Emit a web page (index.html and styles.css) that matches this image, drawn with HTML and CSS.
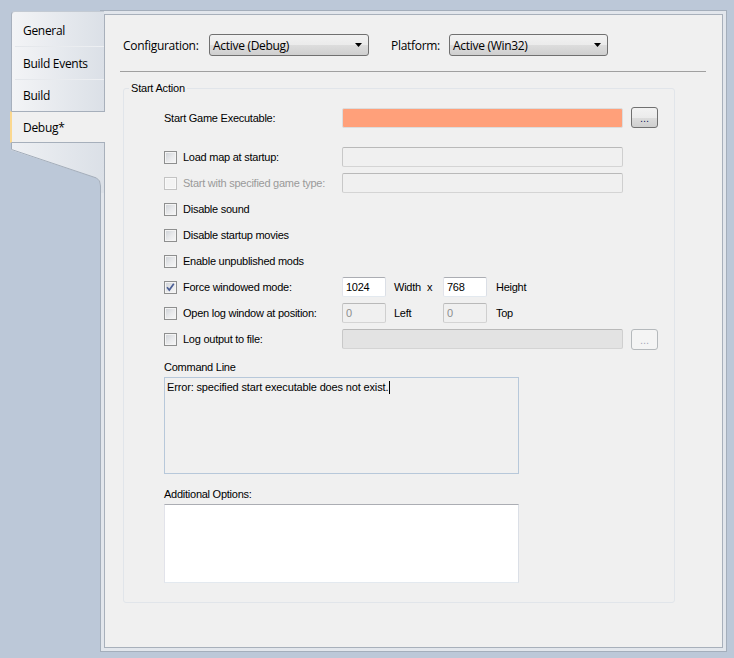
FILE: index.html
```html
<!DOCTYPE html>
<html>
<head>
<meta charset="utf-8">
<link rel="stylesheet" href="styles.css">
</head>
<body>
<div class="window">
  <nav class="tabs">
    <div class="tab-strip">
      <div class="tab">General</div>
      <div class="tab-sep"></div>
      <div class="tab">Build Events</div>
      <div class="tab-sep"></div>
      <div class="tab">Build</div>
    </div>
    <div class="tab active">Debug*</div>
    <svg class="tab-tail" width="94" height="50" viewBox="0 0 94 50">
      <defs>
        <linearGradient id="tailg" x1="0" y1="0" x2="1" y2="0">
          <stop offset="0" stop-color="#eef0f3"/>
          <stop offset="1" stop-color="#dbe0e7"/>
        </linearGradient>
      </defs>
      <path d="M1,0 H94 V50 H90 V43 Q90,37 86,35 L1,7 Z" fill="url(#tailg)"/>
      <path d="M1.5,0 V6.5 L86.5,35 Q90.5,37 90.5,43 V50" fill="none" stroke="#a3adba" stroke-width="1"/>
    </svg>
  </nav>
  <div class="frame">
    <div class="panel">
      <div class="cfg-row">
        <span class="cfg-label cfg-first">Configuration:</span>
        <div class="select sel-config"><span>Active (Debug)</span><svg class="arrow" width="7" height="4" viewBox="0 0 7 4"><path d="M0,0 H7 L3.5,4 Z" fill="#000"/></svg></div>
        <span class="cfg-label cfg-second">Platform:</span>
        <div class="select sel-platform"><span>Active (Win32)</span><svg class="arrow" width="7" height="4" viewBox="0 0 7 4"><path d="M0,0 H7 L3.5,4 Z" fill="#000"/></svg></div>
      </div>
      <div class="sep"></div>
      <fieldset class="group">
        <legend>Start Action</legend>
        <div class="group-body">
          <div class="row row-first">
            <span class="lbl">Start Game Executable:</span>
            <input class="tb tb-wide tb-error" type="text" value="">
            <span class="btn">...</span>
          </div>
          <div class="row">
            <span class="lbl"><span class="cb"></span>Load map at startup:</span>
            <input class="tb tb-wide tb-off" type="text" value="" disabled>
          </div>
          <div class="row">
            <span class="lbl lbl-dis"><span class="cb cb-dis"></span>Start with specified game type:</span>
            <input class="tb tb-wide tb-off" type="text" value="" disabled>
          </div>
          <div class="row">
            <span class="lbl"><span class="cb"></span>Disable sound</span>
          </div>
          <div class="row">
            <span class="lbl"><span class="cb"></span>Disable startup movies</span>
          </div>
          <div class="row">
            <span class="lbl"><span class="cb"></span>Enable unpublished mods</span>
          </div>
          <div class="row">
            <span class="lbl"><span class="cb cb-on"><svg width="11" height="11" viewBox="0 0 11 11"><path d="M2,5.2 L4.3,8 L8.8,1.8" fill="none" stroke="#4b5f96" stroke-width="1.7"/></svg></span>Force windowed mode:</span>
            <input class="tb tb-num" type="text" value="1024">
            <span class="unit unit-a">Width</span><span class="unit unit-x">x</span>
            <input class="tb tb-num" type="text" value="768">
            <span class="unit unit-b">Height</span>
          </div>
          <div class="row">
            <span class="lbl"><span class="cb"></span>Open log window at position:</span>
            <input class="tb tb-num tb-off" type="text" value="0" disabled>
            <span class="unit unit-a">Left</span><span class="unit unit-x"></span>
            <input class="tb tb-num tb-off" type="text" value="0" disabled>
            <span class="unit unit-b">Top</span>
          </div>
          <div class="row">
            <span class="lbl"><span class="cb"></span>Log output to file:</span>
            <input class="tb tb-wide tb-grey" type="text" value="" disabled>
            <span class="btn btn-dis">...</span>
          </div>
          <div class="caption cap-cmd">Command Line</div>
          <div class="area area-cmd">Error: specified start executable does not exist.<span class="caret"></span></div>
          <div class="caption cap-add">Additional Options:</div>
          <div class="area area-add"></div>
        </div>
      </fieldset>
    </div>
  </div>
</div>
</body>
</html>
```
FILE: styles.css
```css
html, body {
  margin: 0;
  padding: 0;
}
body {
  background: #bcc8d8;
  font-family: "Liberation Sans", Arial, sans-serif;
  font-size: 11px;
  color: #000;
}
.window {
  display: flex;
  align-items: flex-start;
  padding: 10px 0 0 10px;
  height: 658px;
  box-sizing: border-box;
}

/* ---------- tabs ---------- */
.tabs {
  width: 95px;
  margin-right: -5px;
  margin-top: 1px;
  position: relative;
  z-index: 2;
  font-family: "Open Sans", "Liberation Sans", sans-serif;
  font-size: 12px;
  letter-spacing: -0.3px;
}
.tab-strip {
  margin-left: 1px;
  width: 93px;
  box-sizing: border-box;
  border-left: 1px solid #a7b0bd;
  border-top: 1px solid #c3cad3;
  border-top-left-radius: 4px;
  background: linear-gradient(to right, #f3f4f6, #dbe0e7);
  padding-top: 3px;
}
.tab {
  height: 31px;
  display: flex;
  align-items: center;
  padding-left: 11px;
  box-sizing: border-box;
}
.tab-strip .tab:nth-child(3) {
  height: 32px;
}
.tab-sep {
  height: 1px;
  margin-left: 3px;
  background: linear-gradient(to right, #e3e6ea, #eef0f3);
}
.tab.active {
  width: 95px;
  height: 32px;
  background: #f0f0f0;
  border-top: 1px solid #a6afbb;
  border-bottom: 1px solid #a6afbb;
  border-left: 2px solid #fbd88f;
  padding-left: 11px;
}
.tab-tail {
  display: block;
}

/* ---------- frame ---------- */
.frame {
  flex: none;
  width: 627px;
  height: 642px;
  box-sizing: border-box;
  border: 1px solid #a4aebb;
  padding: 3px;
  background: #e2e6ec;
}
.panel {
  height: 100%;
  box-sizing: border-box;
  border: 1px solid #a8b0bb;
  background: #f0f0f0;
  overflow: hidden;
}

/* ---------- configuration row ---------- */
.cfg-row {
  display: flex;
  align-items: center;
  height: 22px;
  margin: 19px 0 0 18px;
  font-family: "Open Sans", "Liberation Sans", sans-serif;
  font-size: 12px;
  letter-spacing: -0.3px;
}
.cfg-first { width: 86px; }
.cfg-second { width: 58px; }
.select {
  height: 22px;
  box-sizing: border-box;
  border: 1px solid #707070;
  border-radius: 3px;
  background: linear-gradient(#f2f2f2 0%, #ebebeb 50%, #dddddd 50%, #cfcfcf 100%);
  display: flex;
  align-items: center;
  justify-content: space-between;
  padding: 0 6px 0 3px;
}
.sel-config { width: 160px; margin-right: 22px; }
.sel-platform { width: 159px; }
.arrow { display: block; }

.sep {
  height: 1px;
  background: #a0a0a0;
  margin: 15px 16px 0 15px;
}

/* ---------- group box ---------- */
.group {
  margin: 10px 0 0 18px;
  padding: 0;
  width: 552px;
  min-width: 0;
  box-sizing: border-box;
  border: 1px solid #e1e5ea;
  border-radius: 3px;
}
.group legend {
  margin-left: 5px;
  padding: 0 2px;
  line-height: 13px;
  letter-spacing: -0.2px;
}
.group-body {
  padding: 12px 0 19px 40px;
}
.row {
  display: flex;
  align-items: center;
  height: 20px;
  margin-bottom: 6px;
}
.row-first {
  height: 21px;
  margin-bottom: 19px;
}
.row:last-of-type { margin-bottom: 0; }
.lbl {
  width: 178px;
  flex: none;
  display: flex;
  align-items: center;
  white-space: nowrap;
  letter-spacing: -0.25px;
}
.lbl-dis { color: #9a9a9a; }

.cb {
  width: 13px;
  height: 13px;
  box-sizing: border-box;
  flex: none;
  margin-right: 6px;
  border: 1px solid #8e8f8f;
  background: linear-gradient(135deg, #cdd1d6 0%, #e9eaec 55%, #f7f7f7 100%);
  box-shadow: inset 0 0 0 1px #f4f4f4;
  display: flex;
  align-items: center;
  justify-content: center;
}
.cb-dis {
  border-color: #c3c3c3;
  background: #f3f3f3;
  box-shadow: inset 0 0 0 1px #f9f9f9;
}
.cb svg { display: block; }

.tb {
  height: 20px;
  box-sizing: border-box;
  margin: 0;
  padding: 0 3px;
  border: 1px solid;
  border-color: #abadb3 #dbdfe6 #e3e9ef #e2e3ea;
  border-radius: 2px;
  background: #fff;
  font-family: "Liberation Sans", Arial, sans-serif;
  font-size: 11px;
  letter-spacing: -0.25px;
  color: #000;
  outline: none;
}
.tb-wide { width: 281px; }
.tb-num { width: 44px; }
.tb-error {
  background: #ffa07a;
  border-color: #dcdcdc;
}
.tb-off {
  background: #f0f0f0;
  border-color: #b9b9b9 #cfcfcf #d4d4d4 #c8c8c8;
  color: #8d8d8d;
}
.tb-grey {
  background: #e3e3e3;
  border-color: #b9b9b9 #cfcfcf #d4d4d4 #c8c8c8;
}
.unit {
  flex: none;
  letter-spacing: -0.25px;
}
.unit-a { width: 33px; margin-left: 8px; }
.unit-x { width: 16px; }
.unit-b { margin-left: 9px; }

.btn {
  flex: none;
  width: 27px;
  height: 21px;
  box-sizing: border-box;
  margin-left: 8px;
  border: 1px solid #707070;
  border-radius: 3px;
  background: linear-gradient(#f2f2f2 0%, #ebebeb 50%, #dddddd 50%, #cfcfcf 100%);
  display: flex;
  align-items: center;
  justify-content: center;
  color: #1b1b5e;
  font-size: 11px;
  line-height: 11px;
  padding-top: 2px;
}
.btn-dis {
  border-color: #b5b9bc;
  background: #f4f4f4;
  color: #a8a8b8;
}

.caption {
  line-height: 13px;
  letter-spacing: -0.25px;
}
.cap-cmd { margin-top: 12px; }
.cap-add { margin-top: 14px; }
.area {
  width: 355px;
  box-sizing: border-box;
  margin-top: 3px;
  border: 1px solid;
}
.area-cmd {
  height: 97px;
  border-color: #b7c8da;
  background: #f0f0f0;
  padding: 2px 2px;
  line-height: 14px;
  letter-spacing: -0.15px;
}
.caret {
  display: inline-block;
  width: 1px;
  height: 13px;
  background: #000;
  vertical-align: -3px;
  margin-left: 1px;
}
.area-add {
  height: 79px;
  border-color: #abadb3 #dbdfe6 #e3e9ef #e2e3ea;
  background: #fff;
}
```
